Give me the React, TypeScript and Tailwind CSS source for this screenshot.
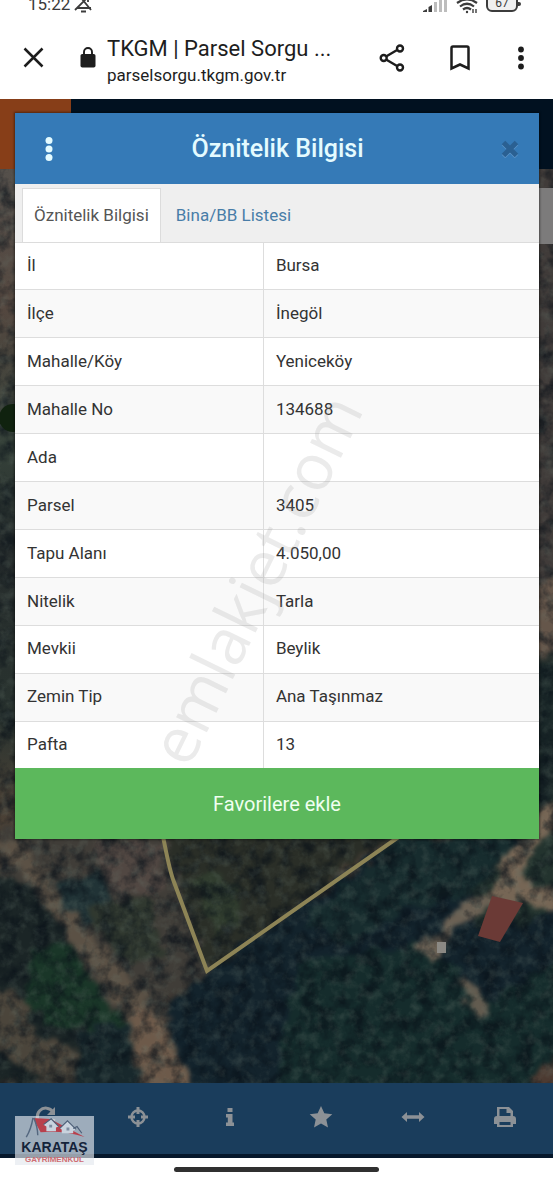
import { useState } from 'react';

type Attribute = {
  label: string;
  value: string;
};

const attributes: Attribute[] = [
  { label: 'İl', value: 'Bursa' },
  { label: 'İlçe', value: 'İnegöl' },
  { label: 'Mahalle/Köy', value: 'Yeniceköy' },
  { label: 'Mahalle No', value: '134688' },
  { label: 'Ada', value: '' },
  { label: 'Parsel', value: '3405' },
  { label: 'Tapu Alanı', value: '4.050,00' },
  { label: 'Nitelik', value: 'Tarla' },
  { label: 'Mevkii', value: 'Beylik' },
  { label: 'Zemin Tip', value: 'Ana Taşınmaz' },
  { label: 'Pafta', value: '13' }
];

const tabs = ['Öznitelik Bilgisi', 'Bina/BB Listesi'];

function StatusBar() {
  return (
    <div className="flex h-4 items-end justify-between pl-7 pr-8 text-[#3c3c3c]">
      <div className="flex items-end gap-1">
        <span className="text-[17px] leading-6">15:22</span>
        <svg className="h-5 w-[19px]" viewBox="0 0 19 20" fill="none" stroke="currentColor" strokeWidth="1.8">
          <path d="M1 14 17 -2M8 3 17 14M3 12H17M14 6V0" />
          <path d="M7 15.500h5" strokeWidth="2" />
        </svg>
      </div>
      <div className="flex items-end gap-2">
        <svg className="h-4 w-[25px]" viewBox="0 0 25 16">
          <path d="M0 12h4v-3l-4 2z M5.500 12h3.500V5l-3.500 2z" fill="#3c3c3c" />
          <path d="M11 12h3V2h-3z M16 12h3V0h-3z M21 12h3V-3h-3z" fill="#bdbdbd" />
        </svg>
        <svg className="h-4 w-[22px]" viewBox="0 0 22 16" fill="none" stroke="currentColor" strokeWidth="2.200">
          <path d="M1 3Q11-4 21 3M4 6.500Q11 1 18 6.500M7 9.500Q11 6.500 15 9.500" />
          <circle cx="11" cy="12" r="1.200" fill="currentColor" stroke="none" />
          <path d="M17 9v4M20 9v4" strokeWidth="1.400" />
        </svg>
        <div className="flex items-end pb-1">
          <span className="flex h-5 w-8 items-end justify-center rounded-md border-2 border-[#3c3c3c] bg-[#f0f0f0] text-xs leading-[14px]">67</span>
          <span className="mb-1.5 h-1 w-[3px] rounded-r bg-[#3c3c3c]" />
        </div>
      </div>
    </div>
  );
}

function BrowserBar() {
  return (
    <header className="flex h-[83px] items-center pl-[23px] pr-7 text-[#1d1d1d]">
      <button type="button" aria-label="Kapat" className="shrink-0">
        <svg className="size-[21px]" viewBox="0 0 21 21" fill="none" stroke="currentColor" strokeWidth="2.500">
          <path d="M1.500 1.500l18 18M19.500 1.500l-18 18" />
        </svg>
      </button>
      <svg className="ml-9 h-[21px] w-4 shrink-0" viewBox="0 0 16 21">
        <rect x="0.500" y="7" width="15" height="13.500" rx="1.800" fill="currentColor" />
        <path d="M4 8V5a4 4 0 0 1 8 0v3" fill="none" stroke="currentColor" strokeWidth="1.900" />
      </svg>
      <div className="ml-[11px] min-w-0 flex-1 pt-1.5">
        <h1 className="truncate text-[22px] leading-7">TKGM | Parsel Sorgu ...</h1>
        <p className="truncate text-[17px] leading-6">parselsorgu.tkgm.gov.tr</p>
      </div>
      <div className="flex shrink-0 items-center">
        <button type="button" aria-label="Paylaş">
          <svg className="h-7 w-[27px]" viewBox="0 0 27 28" fill="none" stroke="currentColor" strokeWidth="2.400">
            <path d="M7.500 12.300 18.500 5.700M7.500 15.700 18.500 22.300" />
            <circle cx="4.700" cy="14" r="3" />
            <circle cx="21" cy="4.500" r="3" />
            <circle cx="21" cy="23.500" r="3" />
          </svg>
        </button>
        <button type="button" aria-label="Yer işareti" className="ml-11">
          <svg className="h-[26px] w-5" viewBox="0 0 20 26" fill="none" stroke="currentColor" strokeWidth="2.500">
            <path d="M1.500 23.500V3Q1.500 1.500 3 1.500H17Q18.500 1.500 18.500 3V23.500L10 19.500z" />
          </svg>
        </button>
        <button type="button" aria-label="Menü" className="ml-[47px]">
          <svg className="h-[26px] w-2" viewBox="0 0 8 26" fill="currentColor">
            <circle cx="4" cy="4.500" r="2.900" />
            <circle cx="4" cy="13" r="2.900" />
            <circle cx="4" cy="21.500" r="2.900" />
          </svg>
        </button>
      </div>
    </header>
  );
}

function SatelliteMap() {
  return (
    <svg className="absolute inset-0 size-full" viewBox="0 169 553 914" preserveAspectRatio="xMidYMax slice" aria-hidden="true">
      <defs>
        <filter id="rough" x="-5%" y="-5%" width="110%" height="110%" colorInterpolationFilters="sRGB">
          <feTurbulence type="fractalNoise" baseFrequency="0.06" numOctaves="3" seed="4" result="n" />
          <feDisplacementMap in="SourceGraphic" in2="n" scale="24" xChannelSelector="R" yChannelSelector="G" />
          <feGaussianBlur stdDeviation="2" />
        </filter>
        <filter id="shade" x="0" y="0" width="100%" height="100%" colorInterpolationFilters="sRGB">
          <feTurbulence type="fractalNoise" baseFrequency="0.06" numOctaves="4" seed="9" />
          <feColorMatrix values="0 0 0 0 0.030  0 0 0 0 0.060  0 0 0 0 0.090  2.600 0 0 0 -1.050" />
        </filter>
        <filter id="light" x="0" y="0" width="100%" height="100%" colorInterpolationFilters="sRGB">
          <feTurbulence type="fractalNoise" baseFrequency="0.09" numOctaves="4" seed="21" />
          <feColorMatrix values="0 0 0 0 0.420  0 0 0 0 0.480  0 0 0 0 0.440  0 2 0 0 -0.900" />
        </filter>
        <linearGradient id="edge" x1="0" y1="0" x2="0" y2="1">
          <stop offset="0" stopColor="#55504b" />
          <stop offset="0.150" stopColor="#54473f" />
          <stop offset="0.300" stopColor="#36423a" />
          <stop offset="0.420" stopColor="#262c2c" />
          <stop offset="0.600" stopColor="#29332f" />
          <stop offset="0.700" stopColor="#4b4136" />
          <stop offset="1" stopColor="#33302c" />
        </linearGradient>
      </defs>
      <rect y="169" width="553" height="914" fill="url(#edge)" />
      <g filter="url(#rough)">
        <path d="M520 160h50v430h-50z" fill="#403b39" />
        <path d="M520 585l50-15v80l-50 10z" fill="#65564a" />
        <path d="M520 660h50v150h-50z" fill="#1a2728" />
        <path d="M0 830 H170 L208 972 L165 1000 L190 1083 H0z" fill="#403d38" />
        <path d="M90 840h70l5 45-50 10z" fill="#514742" />
        <path d="M-10 870 L40 890 L75 950 L80 1083 L-10 1083z" fill="#1b2526" />
        <path d="M60 880 L100 868 L115 905 L90 925 L62 905z" fill="#213336" />
        <path d="M90 905 L150 895 L165 950 L130 965 L105 945z" fill="#30382f" />
        <path d="M28 950 L70 940 L90 975 L125 1022 L70 1032 L25 1010z" fill="#1a3628" />
        <path d="M-10 985 L25 1000 L35 1035 L75 1045 L80 1083 L50 1083 L-10 1045z" fill="#4b453b" />
        <path d="M80 1030 L128 1020 L140 1090 L75 1090z" fill="#18282c" />
        <path d="M-10 835 L20 842 L85 930 L135 985 L165 1022 L195 1090 L138 1090 L128 1020 L85 958 L50 908z" fill="#5b5145" />
        <path d="M130 1000 L160 1015 L194 1090 L142 1090z" fill="#6d5a4a" />
        <path d="M160 820h250L208 972z" fill="#2a2e27" />
        <path d="M195 880 L225 870 L245 915 L215 935z" fill="#303c2e" />
        <path d="M210 970 L398 838 H560 V1095 H195 L165 1010z" fill="#13232c" />
        <path d="M400 835h110l-10 50-90 25-60 35-50-20z" fill="#172c2e" />
        <path d="M300 960 L430 945 L490 1000 L560 960 V1095 H270z" fill="#152c2c" />
        <path d="M500 860 L525 838 L565 835 L565 905 L520 925 L480 930 L470 890z" fill="#23332e" />
        <path d="M415 950 L445 925 L455 905 L490 893 L492 905 L462 920 L445 945 L430 962z" fill="#6b6154" />
        <path d="M498 865 L520 832 L548 805 L560 820 L534 850 L525 882 L560 895 L560 912 L515 900 L490 905z" fill="#766655" />
        <path d="M455 980l15-5 22 38-15 8z" fill="#625b4f" />
        <path d="M535 1070l25-12v30h-30z" fill="#4c3a31" />
      </g>
      <rect y="169" width="553" height="914" filter="url(#shade)" opacity="0.650" />
      <rect y="169" width="553" height="914" filter="url(#light)" opacity="0.300" />
      <path d="M492 896l31 7-23 39-22-6z" fill="#6b3a36" />
      <path d="M437 942h9v11h-9z" fill="#8b8984" />
      <circle cx="13" cy="418" r="14" fill="#10220f" />
      <rect x="536" y="188" width="20" height="56" fill="#7c7b7b" />
      <path d="M160 820 Q169 870 174 882 L207 971 L430 815" fill="none" stroke="#8d8456" strokeWidth="4" />
    </svg>
  );
}

function Toolbar() {
  const icon = 'size-6';
  return (
    <nav className="grid h-[75px] grid-cols-6 items-center justify-items-center border-b-4 border-[#06182b] bg-[#1a3d5c] pb-1 pr-0.5 text-[#8c9196]">
      <button type="button" aria-label="Yenile">
        <svg className={icon} viewBox="0 0 24 24" fill="none" stroke="currentColor" strokeWidth="3">
          <path d="M19 7A8.500 8.500 0 1 0 20 14" />
          <path d="M21 2v8h-8z" fill="currentColor" stroke="none" />
        </svg>
      </button>
      <button type="button" aria-label="Konum">
        <svg className={icon} viewBox="0 0 24 24" fill="none" stroke="currentColor" strokeWidth="2.400">
          <circle cx="12" cy="12" r="6.500" />
          <path d="M12 2v7M12 15v7M2 12h7M15 12h7" strokeWidth="3" />
        </svg>
      </button>
      <button type="button" aria-label="Bilgi">
        <svg className={icon} viewBox="0 0 24 24" fill="currentColor">
          <path d="M9.500 3h5v4h-5zM8 9h6.500v8.500H16V21H8v-3.500h1.800v-5H8z" />
        </svg>
      </button>
      <button type="button" aria-label="Favoriler">
        <svg className={icon} viewBox="0 0 24 24" fill="currentColor">
          <path d="M12 1l3.300 7.300 8 .9-6 5.300 1.700 7.900L12 18.400l-7 4 1.700-7.900-6-5.300 8-.9z" />
        </svg>
      </button>
      <button type="button" aria-label="Ölçüm">
        <svg className={icon} viewBox="0 0 24 24" fill="currentColor">
          <path d="M0.500 12 6 7v3.300h12V7l5.500 5-5.500 5v-3.300H6V17z" />
        </svg>
      </button>
      <button type="button" aria-label="Yazdır">
        <svg className={icon} viewBox="0 0 24 24" fill="currentColor" fillRule="evenodd">
          <path d="M5 2h11l4 4v5q3 0 3 3v5h-3v3H4v-3H1v-5q0-3 3-3V2zM6.500 4v7h11V8h-4V4zM6.500 17v3h11v-3z" />
        </svg>
      </button>
    </nav>
  );
}

function ParcelDialog() {
  const [activeTab, setActiveTab] = useState(tabs[0]);

  return (
    <section role="dialog" aria-label="Öznitelik Bilgisi" className="relative overflow-hidden bg-white shadow-[0_0_2px_1px_#00000066]">
      <div className="flex h-[71px] items-center justify-between bg-[#357ab7] pl-[29px] pr-5">
        <button type="button" aria-label="Seçenekler">
          <svg className="h-6 w-[10px]" viewBox="0 0 10 24" fill="#e4fbff">
            <circle cx="5" cy="3.500" r="3.500" />
            <circle cx="5" cy="12" r="3.500" />
            <circle cx="5" cy="20.500" r="3.500" />
          </svg>
        </button>
        <h2 className="text-[25px] font-medium leading-8 text-[#e4fbff]">Öznitelik Bilgisi</h2>
        <button type="button" aria-label="Pencereyi kapat">
          <svg className="size-[18px]" viewBox="0 0 18 18" fill="none" strokeWidth="5">
            <path d="M2.500 3.500l13 13M15.500 3.500l-13 13" stroke="#5c95c9" />
            <path d="M2.500 2.500l13 13M15.500 2.500l-13 13" stroke="#2a6092" />
          </svg>
        </button>
      </div>
      <div className="flex h-[59px] items-end border-b border-[#dcdcdc] bg-[#efefef] pl-[7px]">
        {tabs.map(tab => (
          <button
            key={tab}
            type="button"
            onClick={() => setActiveTab(tab)}
            className={
              activeTab === tab
                ? 'h-[54px] border border-b-0 border-[#dcdcdc] bg-white px-[11px] text-[17px] text-[#555555]'
                : 'h-[54px] border border-b-0 border-transparent px-[14px] text-[17px] text-[#487da8]'
            }
          >
            {tab}
          </button>
        ))}
      </div>
      <table className="h-[525px] w-full table-fixed border-collapse text-left text-[17px] text-[#333333]">
        <colgroup>
          <col className="w-[47.4%]" />
          <col />
        </colgroup>
        <tbody>
          {attributes.map(({ label, value }) => (
            <tr key={label} className="border-b border-[#dddddd] last:border-b-0 even:bg-[#f9f9f9]">
              <th scope="row" className="border-r border-[#dddddd] px-3 font-normal">{label}</th>
              <td className="px-3">{value}</td>
            </tr>
          ))}
        </tbody>
      </table>
      <button type="button" className="h-[71px] w-full bg-[#5cb85c] text-[20px] text-[#f0fff0]">
        Favorilere ekle
      </button>
      <span className="pointer-events-none absolute left-[240px] top-[466px] -translate-x-1/2 -translate-y-1/2 -rotate-[64deg] whitespace-nowrap font-['Open_Sans',sans-serif] text-[64px] leading-none text-[#999999]/20">
        emlakjet.com
      </span>
    </section>
  );
}

function AgencyBadge() {
  return (
    <div className="absolute bottom-[15px] left-[15px] flex h-[49px] w-[79px] flex-col items-center bg-[#e4e8ee]/65">
      <svg className="h-6 w-[62px]" viewBox="0 0 62 24">
        <path d="M8 2 L26 3 L62 22 Q40 15 16 17z" fill="#b8404c" />
        <path d="M8 2 Q6 14 1 22" fill="none" stroke="#54677f" strokeWidth="1.500" />
        <path d="M9 2 Q13 12 13 20" fill="none" stroke="#54677f" strokeWidth="1.500" />
        <path d="M19 9l8-6 8 8-3 1v4H22v-5zM36 13l8-8 9 9-3 1v3H38v-4z" fill="#c9d3de" />
        <path d="M19 9l8-6 8 8M36 13l8-8 9 9M50 13l4-2 5 7" fill="none" stroke="#4d5f78" strokeWidth="1.200" />
        <path d="M25 9h3v3h-3zM43 12h3v3h-3z" fill="#7d8ba0" />
      </svg>
      <span className="font-['Liberation_Sans',sans-serif] text-[14px] font-bold leading-4 text-[#14233a]">KARATAŞ</span>
      <span className="whitespace-nowrap font-['Liberation_Sans',sans-serif] text-[8px] font-bold leading-[10px] text-[#cf6c72]">GAYRİMENKUL</span>
    </div>
  );
}

export default function App() {
  return (
    <div className="relative min-h-screen overflow-hidden bg-white font-['Roboto',sans-serif]">
      <StatusBar />
      <BrowserBar />
      <main className="grid">
        <div className="col-start-1 row-start-1 flex flex-col">
          <div className="flex h-[70px] bg-[#011120]">
            <div className="w-[71px] bg-[#873e18]" />
          </div>
          <div className="relative flex-1 overflow-hidden bg-[#1c2624]">
            <SatelliteMap />
          </div>
          <Toolbar />
        </div>
        <div className="relative col-start-1 row-start-1 pb-[319px] pl-[15px] pr-[14px] pt-[14px]">
          <ParcelDialog />
        </div>
      </main>
      <footer className="flex h-[22px] items-center justify-center">
        <div className="h-[5px] w-[37%] rounded-full bg-[#303030]" />
      </footer>
      <AgencyBadge />
    </div>
  );
}
